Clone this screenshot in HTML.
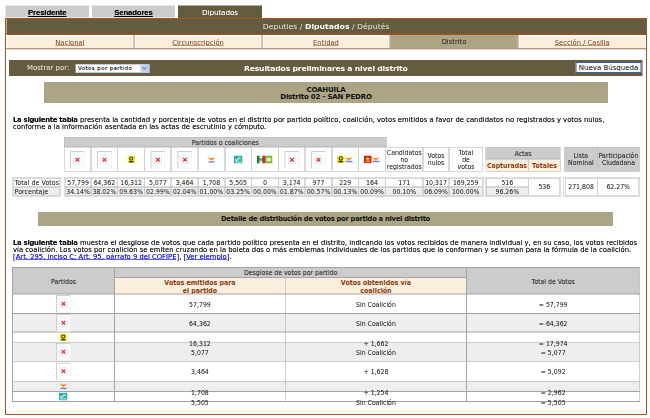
<!DOCTYPE html>
<html lang="es">
<head>
<meta charset="utf-8">
<title>Resultados preliminares a nivel distrito</title>
<style>
html,body{margin:0;padding:0;background:#fff;overflow:hidden;}
body{width:650px;height:418px;}
#w{position:absolute;left:0;top:0;width:1300px;height:836px;transform:scale(.5);transform-origin:0 0;
  font-family:"DejaVu Sans","Liberation Sans",sans-serif;font-size:13px;color:#222;}
#w *{box-sizing:border-box;}
.tab{position:absolute;top:11px;height:24px;background:#ccc;text-align:center;font-family:"Liberation Sans",sans-serif;font-weight:bold;font-size:15.5px;letter-spacing:-.25px;line-height:27px;color:#000;overflow:visible;text-shadow:0 0 1px rgba(0,0,0,.5);}
.tab a{color:#000;text-decoration:underline;text-decoration-thickness:1.6px;text-underline-offset:1.5px;}
.tab.on{height:27px;background:#655b3e;color:#fff;text-shadow:0 0 1px rgba(255,255,255,.4);font-weight:normal;font-family:"DejaVu Sans",sans-serif;font-size:14.5px;}
#box{position:absolute;left:10.2px;top:35.6px;width:1283.8px;height:794.4px;border:2.5px solid #aa5520;background:#fff;}
#bar{position:absolute;left:12.7px;top:38px;width:1279.3px;height:30px;background:#655b3e;color:#e8e4d8;font-size:15.5px;line-height:30px;text-align:center;}
#bar b{color:#fff;}
#navt{position:absolute;left:12.7px;top:66px;width:1279.3px;height:6px;background:linear-gradient(#7a5a34 0,#7a5a34 2px,#a8501a 2px,#a8501a 4px,#ecc9ad 4px,#ecc9ad 6px);}
#navb{position:absolute;left:12.7px;top:96px;width:1279.3px;height:4px;background:linear-gradient(#b98e7a 0,#b98e7a 2px,#ead9d0 2px,#ead9d0 4px);}
#navw{position:absolute;left:12.7px;top:70px;width:1279.3px;height:26px;background:#fffbf6;}
.nv{position:absolute;top:70px;height:26px;text-align:center;line-height:23px;font-size:13.5px;background:#fbeedd;border:3px solid #fffbf6;border-top-width:4px;border-bottom-width:0;}
.nv a{color:#7a3b1d;text-decoration:underline;}
.nv.on{background:#aba585;color:#222;border:none;line-height:27px;}
.ns{position:absolute;top:70px;height:26px;width:2px;background:#b08a78;}
#mb{position:absolute;left:18px;top:120px;width:1267px;height:31.5px;background:#655b3e;color:#fff;}
#mb .l{position:absolute;left:36px;top:0;line-height:30px;font-size:13.8px;color:#f4f0e6;}
#mb .t{position:absolute;left:0;width:100%;top:0;line-height:32px;font-size:15.4px;letter-spacing:-.4px;font-weight:bold;text-align:center;}
#sel{text-shadow:0 0 1px rgba(0,0,0,.45);position:absolute;left:133px;top:8px;width:147px;height:17px;background:#fff;border:1px solid #7f9db9;font-size:11px;letter-spacing:.8px;line-height:14.5px;color:#000;padding-left:4px;white-space:nowrap;}
#sel i{position:absolute;right:0;top:0;width:16px;height:15px;background:#c1d2f8;border:1px solid #a9bff0;border-radius:2px;}
#sel i svg{position:absolute;left:1px;top:2px;}
#btn{position:absolute;left:1133px;top:4px;width:132px;height:22px;background:#fff;border:2px solid #3b5fa8;font-size:14px;line-height:17px;text-align:center;color:#000;}
.hd{position:absolute;background:#aba585;color:#111;font-weight:bold;text-align:center;font-size:13.5px;}
.p{position:absolute;left:26px;font-size:13.65px;line-height:14.8px;color:#111;text-shadow:0 0 1.2px rgba(0,0,0,.55);white-space:nowrap;}
.p b{letter-spacing:-.5px;}
.p a{color:#00f;text-decoration:underline;text-shadow:0 0 1.2px rgba(0,0,255,.5);}
.c{text-shadow:0 0 1px rgba(0,0,0,.18);position:absolute;border:1px solid #b4b4b4;background:#fff;text-align:center;font-size:12.4px;color:#222;white-space:nowrap;overflow:visible;display:flex;align-items:center;justify-content:center;line-height:14px;padding-top:1.5px;}
.c.g{background:#ccc;}
.c.e{background:#eee;padding-top:3.5px;}
.c.be{background:#fbeedd;color:#8b3a0e;font-weight:bold;text-shadow:none;}
.c.lft{justify-content:flex-start;padding-left:1px;font-size:12.8px;}
.fr{position:absolute;border:1.2px solid #bcbcbc;}
.bi{position:relative;width:29px;height:35px;border-left:2px solid #d0d0c8;border-top:2px solid #d0d0c8;border-right:1px solid #ececec;border-bottom:1px solid #ececec;background:rgba(255,255,255,.6);}
.bi svg{position:absolute;left:5px;top:7px;}
.ic{display:block;}
.r{position:absolute;left:25px;width:1255px;border-bottom:1px solid #adadad;}
.r.e{background:#eee;}
.t2{text-shadow:0 0 1px rgba(0,0,0,.18);position:absolute;font-size:12.4px;line-height:14px;text-align:center;color:#222;white-space:nowrap;}
.v{position:absolute;width:1px;background:#adadad;}
</style>
</head>
<body>
<div id="w">
<div class="tab" style="left:11px;width:167px;"><a>Presidente</a></div>
<div class="tab" style="left:184px;width:166px;"><a>Senadores</a></div>
<div class="tab on" style="left:356px;width:168px;">Diputados</div>
<div id="box"></div>
<div id="bar">Deputies / <b>Diputados</b> / Députés</div>
<div id="navw"></div><div id="navt"></div><div id="navb"></div>
<div class="nv" style="left:12.7px;width:254.3px;"><a>Nacional</a></div>
<div class="nv" style="left:269px;width:254px;"><a>Circunscripción</a></div>
<div class="nv" style="left:525px;width:254px;"><a>Entidad</a></div>
<div class="nv on" style="left:781px;width:254px;">Distrito</div>
<div class="nv" style="left:1037px;width:255px;"><a>Sección / Casilla</a></div>
<div class="ns" style="left:267px;"></div><div class="ns" style="left:523px;"></div><div class="ns" style="left:779px;"></div><div class="ns" style="left:1035px;"></div>
<div id="mb">
<span class="l">Mostrar por:</span>
<div class="t">Resultados preliminares a nivel distrito</div>
<div id="sel">Votos por partido<i><svg width="12" height="10" viewBox="0 0 12 10"><path d="M2.500 2.500l3.500 4 3.500-4" stroke="#3f5286" stroke-width="2" fill="none"/></svg></i></div>
<div id="btn">Nueva Búsqueda</div>
</div>
<div class="hd" style="left:88px;top:164px;width:1128px;height:41.4px;line-height:15px;padding-top:6.5px;font-size:14px;letter-spacing:-.35px;">COAHUILA<br>Distrito 02 - SAN PEDRO</div>
<div class="p" style="top:231.5px;"><b>La siguiente tabla</b> presenta la cantidad y porcentaje de votos en el distrito por partido político, coalición, votos emitidos a favor de candidatos no registrados y votos nulos,<br>conforme a la información asentada en las actas de escrutinio y cómputo.</div>

<div class="fr" style="left:24.8px;top:353.800px;width:96.8px;height:39.400px;"></div>
<div class="fr" style="left:128.2px;top:353.800px;width:839.2px;height:39.400px;"></div>
<div class="fr" style="left:970px;top:353.800px;width:152.4px;height:39.400px;"></div>
<div class="fr" style="left:1127.4px;top:353.800px;width:153px;height:39.400px;"></div>
<div class="c g" style="left:128.2px;top:273.5px;width:644.6px;height:20.5px;">Partidos o coaliciones</div>
<div class="c " style="left:128.2px;top:294px;width:53.55px;height:49px;"><div class="bi"><svg width="16" height="17" viewBox="0 0 16 17"><rect x=".5" y=".5" width="15" height="16" fill="#fff" stroke="#d9d9d9"/><path d="M4.200 4.700l7.600 7.600M11.800 4.700l-7.600 7.600" stroke="#e8202a" stroke-width="2.300" fill="none"/></svg></div></div>
<div class="c " style="left:130.4px;top:356px;width:51.35px;height:17.8px;">57,799</div>
<div class="c e" style="left:130.4px;top:373.8px;width:51.35px;height:17.4px;">34.14%</div>
<div class="c " style="left:181.75px;top:294px;width:53.55px;height:49px;"><div class="bi"><svg width="16" height="17" viewBox="0 0 16 17"><rect x=".5" y=".5" width="15" height="16" fill="#fff" stroke="#d9d9d9"/><path d="M4.200 4.700l7.600 7.600M11.800 4.700l-7.600 7.600" stroke="#e8202a" stroke-width="2.300" fill="none"/></svg></div></div>
<div class="c " style="left:181.75px;top:356px;width:53.55px;height:17.8px;">64,362</div>
<div class="c e" style="left:181.75px;top:373.8px;width:53.55px;height:17.4px;">38.02%</div>
<div class="c " style="left:235.3px;top:294px;width:53.55px;height:49px;"><svg class="ic" width="15" height="16" viewBox="0 0 15 15"><rect width="15" height="15" fill="#f7ea1e"/><circle cx="7.500" cy="5.600" r="3.200" fill="none" stroke="#3a3a10" stroke-width="2.100"/><rect x="3.200" y="10.500" width="8.600" height="2.700" fill="#2a2a10"/></svg></div>
<div class="c " style="left:235.3px;top:356px;width:53.55px;height:17.8px;">16,312</div>
<div class="c e" style="left:235.3px;top:373.8px;width:53.55px;height:17.4px;">09.63%</div>
<div class="c " style="left:288.85px;top:294px;width:53.55px;height:49px;"><div class="bi"><svg width="16" height="17" viewBox="0 0 16 17"><rect x=".5" y=".5" width="15" height="16" fill="#fff" stroke="#d9d9d9"/><path d="M4.200 4.700l7.600 7.600M11.800 4.700l-7.600 7.600" stroke="#e8202a" stroke-width="2.300" fill="none"/></svg></div></div>
<div class="c " style="left:288.85px;top:356px;width:53.55px;height:17.8px;">5,077</div>
<div class="c e" style="left:288.85px;top:373.8px;width:53.55px;height:17.4px;">02.99%</div>
<div class="c " style="left:342.4px;top:294px;width:53.55px;height:49px;"><div class="bi"><svg width="16" height="17" viewBox="0 0 16 17"><rect x=".5" y=".5" width="15" height="16" fill="#fff" stroke="#d9d9d9"/><path d="M4.200 4.700l7.600 7.600M11.800 4.700l-7.600 7.600" stroke="#e8202a" stroke-width="2.300" fill="none"/></svg></div></div>
<div class="c " style="left:342.4px;top:356px;width:53.55px;height:17.8px;">3,464</div>
<div class="c e" style="left:342.4px;top:373.8px;width:53.55px;height:17.4px;">02.04%</div>
<div class="c " style="left:395.95px;top:294px;width:53.55px;height:49px;"><svg class="ic" width="16" height="13" viewBox="0 0 16 13"><path d="M1 1q3.500 2.500 6 2.200h2q2.500.3 6-2.200-1.500 4.300-5 5.300l-2 2.200-2-2.200Q2.500 5.300 1 1z" fill="#f58a28"/><rect x="2" y="9.500" width="12" height="2.600" fill="#5f7fd0"/></svg></div>
<div class="c " style="left:395.95px;top:356px;width:53.55px;height:17.8px;">1,708</div>
<div class="c e" style="left:395.95px;top:373.8px;width:53.55px;height:17.4px;">01.00%</div>
<div class="c " style="left:449.5px;top:294px;width:53.55px;height:49px;"><svg class="ic" width="17" height="16" viewBox="0 0 15 14"><rect width="15" height="14" fill="#2bb3a9"/><path d="M2 7l3 2 4-5 3 1" stroke="#fff" stroke-width="1.8" fill="none"/><rect x="2" y="10.5" width="11" height="1.6" fill="#d6f2f0"/></svg></div>
<div class="c " style="left:449.5px;top:356px;width:53.55px;height:17.8px;">5,505</div>
<div class="c e" style="left:449.5px;top:373.8px;width:53.55px;height:17.4px;">03.25%</div>
<div class="c " style="left:503.05px;top:294px;width:53.55px;height:49px;"><svg class="ic" width="31" height="16" viewBox="0 0 29 15"><rect width="5" height="15" fill="#0a8a3c"/><rect x="5" width="5" height="15" fill="#eee"/><rect x="10" width="5" height="15" fill="#d8232a"/><rect x="15" width="14" height="15" fill="#7ab829"/><path d="M18 4h8v7h-8z" fill="#e9f3c8"/><path d="M3 5h10v5H3z" fill="#444" opacity=".55"/></svg></div>
<div class="c " style="left:503.05px;top:356px;width:53.55px;height:17.8px;">0</div>
<div class="c e" style="left:503.05px;top:373.8px;width:53.55px;height:17.4px;">00.00%</div>
<div class="c " style="left:556.6px;top:294px;width:53.55px;height:49px;"><div class="bi"><svg width="16" height="17" viewBox="0 0 16 17"><rect x=".5" y=".5" width="15" height="16" fill="#fff" stroke="#d9d9d9"/><path d="M4.200 4.700l7.600 7.600M11.800 4.700l-7.600 7.600" stroke="#e8202a" stroke-width="2.300" fill="none"/></svg></div></div>
<div class="c " style="left:556.6px;top:356px;width:53.55px;height:17.8px;">3,174</div>
<div class="c e" style="left:556.6px;top:373.8px;width:53.55px;height:17.4px;">01.87%</div>
<div class="c " style="left:610.15px;top:294px;width:53.55px;height:49px;"><div class="bi"><svg width="16" height="17" viewBox="0 0 16 17"><rect x=".5" y=".5" width="15" height="16" fill="#fff" stroke="#d9d9d9"/><path d="M4.200 4.700l7.600 7.600M11.800 4.700l-7.600 7.600" stroke="#e8202a" stroke-width="2.300" fill="none"/></svg></div></div>
<div class="c " style="left:610.15px;top:356px;width:53.55px;height:17.8px;">977</div>
<div class="c e" style="left:610.15px;top:373.8px;width:53.55px;height:17.4px;">00.57%</div>
<div class="c " style="left:663.7px;top:294px;width:53.55px;height:49px;"><svg class="ic" width="32" height="16" viewBox="0 0 32 16"><rect width="15" height="15.500" fill="#f7ea1e"/><circle cx="7.500" cy="5.800" r="3.300" fill="none" stroke="#3a3a10" stroke-width="2.200"/><rect x="3.200" y="10.800" width="8.600" height="2.800" fill="#2a2a10"/><path d="M16.500 3q3.500 2.500 6 2.200h2q2.500.3 6-2.200-1.500 4.300-5 5.300l-2 2.200-2-2.200q-3.500-1-5-5.300z" fill="#f58a28"/><rect x="17" y="10.500" width="14" height="3" fill="#6a86d2"/></svg></div>
<div class="c " style="left:663.7px;top:356px;width:53.55px;height:17.8px;">229</div>
<div class="c e" style="left:663.7px;top:373.8px;width:53.55px;height:17.4px;">00.13%</div>
<div class="c " style="left:717.25px;top:294px;width:53.55px;height:49px;"><svg class="ic" width="32" height="16" viewBox="0 0 32 16"><rect width="15" height="15.500" fill="#e3141c"/><path d="M7.500 1.500l1.300 3.600h3.900l-3.100 2.300 1.200 3.700-3.300-2.300-3.300 2.300 1.200-3.700-3.100-2.300h3.900z" fill="#ffd21e"/><rect x="3" y="10.500" width="9" height="3" fill="#ffb400" opacity=".85"/><path d="M16.500 3q3.500 2.500 6 2.200h2q2.500.3 6-2.200-1.500 4.300-5 5.300l-2 2.200-2-2.200q-3.500-1-5-5.300z" fill="#f58a28"/><rect x="17" y="10.500" width="14" height="3" fill="#6a86d2"/></svg></div>
<div class="c " style="left:717.25px;top:356px;width:53.55px;height:17.8px;">164</div>
<div class="c e" style="left:717.25px;top:373.8px;width:53.55px;height:17.4px;">00.09%</div>
<div class="c " style="left:771px;top:294px;width:75px;height:49px;">Candidatos<br>no<br>registrados</div>
<div class="c " style="left:771px;top:356px;width:75px;height:17.8px;">171</div>
<div class="c e" style="left:771px;top:373.8px;width:75px;height:17.4px;">00.10%</div>
<div class="c " style="left:846px;top:294px;width:52px;height:49px;">Votos<br>nulos</div>
<div class="c " style="left:846px;top:356px;width:52px;height:17.8px;">10,317</div>
<div class="c e" style="left:846px;top:373.8px;width:52px;height:17.4px;">06.09%</div>
<div class="c " style="left:898px;top:294px;width:68px;height:49px;">Total<br>de<br>votos</div>
<div class="c " style="left:898px;top:356px;width:66.8px;height:17.8px;">169,259</div>
<div class="c e" style="left:898px;top:373.8px;width:66.8px;height:17.4px;">100.00%</div>
<div class="c g" style="left:971px;top:294px;width:150px;height:24px;">Actas</div>
<div class="c be" style="left:971px;top:318px;width:86px;height:25px;">Capturadas</div>
<div class="c be" style="left:1057px;top:318px;width:64px;height:25px;">Totales</div>
<div class="c " style="left:972.2px;top:356px;width:84.8px;height:17.8px;">516</div>
<div class="c e" style="left:972.2px;top:373.8px;width:84.8px;height:17.4px;">96.26%</div>
<div class="c " style="left:1057px;top:356px;width:63.2px;height:35.2px;">536</div>
<div class="c g" style="left:1128.8px;top:294px;width:65.8px;height:49px;">Lista<br>Nominal</div>
<div class="c g" style="left:1194.6px;top:294px;width:84.8px;height:49px;">Participación<br>Ciudadana</div>
<div class="c " style="left:1129.6px;top:356px;width:65px;height:35.2px;">271,808</div>
<div class="c " style="left:1194.6px;top:356px;width:83.6px;height:35.2px;">62.27%</div>
<div class="c lft" style="left:27px;top:356px;width:92.4px;height:17.8px;">Total de Votos</div>
<div class="c e lft" style="left:27px;top:373.8px;width:92.4px;height:17.4px;">Porcentaje</div>
<div class="hd" style="left:76px;top:424px;width:1150px;height:27px;line-height:27px;letter-spacing:-.52px;">Detalle de distribución de votos por partido a nivel distrito</div>
<div class="p" style="top:476.5px;"><b>La siguiente tabla</b> muestra el desglose de votos que cada partido político presenta en el distrito, indicando los votos recibidos de manera individual y, en su caso, los votos recibidos<br>vía coalición. Los votos por coalición se emiten cruzando en la boleta dos o más emblemas individuales de los partidos que la conforman y se suman para la fórmula de la coalición.<br><a>[Art. 295, inciso C; Art. 95, párrafo 9 del COFIPE]</a>, <a>[Ver ejemplo]</a>.</div>

<div class="" style="position:absolute;left:24.8px;top:535px;width:204.4px;height:53px;background:#ccc;display:flex;align-items:center;justify-content:center;text-align:center;font-size:12.4px;line-height:14px;color:#222;text-shadow:0 0 1px rgba(0,0,0,.18);padding-top:2px;">Partidos</div>
<div class="" style="position:absolute;left:229.2px;top:535px;width:704px;height:20px;background:#ccc;display:flex;align-items:center;justify-content:center;text-align:center;font-size:12.4px;line-height:14px;color:#222;text-shadow:0 0 1px rgba(0,0,0,.18);">Desglose de votos por partido</div>
<div class="" style="position:absolute;left:229.2px;top:555px;width:341.4px;height:33px;background:#fbeedd;display:flex;align-items:center;justify-content:center;text-align:center;font-size:12.6px;line-height:16px;color:#8b3a0e;font-weight:bold;padding-top:3px;">Votos emitidos para<br>el partido</div>
<div class="" style="position:absolute;left:570.6px;top:555px;width:362.6px;height:33px;background:#fbeedd;display:flex;align-items:center;justify-content:center;text-align:center;font-size:12.6px;line-height:16px;color:#8b3a0e;font-weight:bold;padding-top:3px;">Votos obtenidos vía<br>coalición</div>
<div class="" style="position:absolute;left:933.2px;top:535px;width:346.2px;height:53px;background:#ccc;display:flex;align-items:center;justify-content:center;text-align:center;font-size:12.4px;line-height:14px;color:#222;text-shadow:0 0 1px rgba(0,0,0,.18);padding-top:2px;">Total de Votos</div>
<div class="" style="position:absolute;left:24.8px;top:626.8px;width:1254.6px;height:37.4px;background:#eee;"></div>
<div class="" style="position:absolute;left:24.8px;top:685.4px;width:1254.6px;height:37.2px;background:#eee;"></div>
<div class="" style="position:absolute;left:24.8px;top:762.4px;width:1254.6px;height:20.8px;background:#eee;"></div>
<div class="" style="position:absolute;left:24px;top:587.2px;width:1256.2px;height:1.6px;background:#a4a4a4;"></div>
<div class="" style="position:absolute;left:24px;top:626px;width:1256.2px;height:1.6px;background:#a4a4a4;"></div>
<div class="" style="position:absolute;left:24px;top:663.4px;width:1256.2px;height:1.6px;background:#a4a4a4;"></div>
<div class="" style="position:absolute;left:24px;top:684.6px;width:1256.2px;height:1.6px;background:#a4a4a4;"></div>
<div class="" style="position:absolute;left:24px;top:721.8px;width:1256.2px;height:1.6px;background:#a4a4a4;"></div>
<div class="" style="position:absolute;left:24px;top:761.6px;width:1256.2px;height:1.6px;background:#a4a4a4;"></div>
<div class="" style="position:absolute;left:24px;top:782.4px;width:1256.2px;height:1.6px;background:#a4a4a4;"></div>
<div class="" style="position:absolute;left:24px;top:802.4px;width:1256.2px;height:1.6px;background:#a4a4a4;"></div>
<div class="" style="position:absolute;left:24px;top:534.2px;width:1256.2px;height:1.6px;background:#a4a4a4;"></div>
<div class="" style="position:absolute;left:229.2px;top:554.2px;width:704px;height:1.6px;background:#a4a4a4;"></div>
<div class="" style="position:absolute;left:24px;top:535px;width:1.6px;height:268.2px;background:#a4a4a4;"></div>
<div class="" style="position:absolute;left:228.4px;top:535px;width:1.6px;height:268.2px;background:#a4a4a4;"></div>
<div class="" style="position:absolute;left:569.8px;top:555px;width:1.6px;height:248.2px;background:#a4a4a4;"></div>
<div class="" style="position:absolute;left:932.4px;top:535px;width:1.6px;height:268.2px;background:#a4a4a4;"></div>
<div class="" style="position:absolute;left:1278.6px;top:535px;width:1.6px;height:268.2px;background:#a4a4a4;"></div>
<div style="position:absolute;left:24.8px;top:588px;width:204.39999999999998px;height:38.8px;display:flex;align-items:center;justify-content:center;"><div class="bi"><svg width="16" height="17" viewBox="0 0 16 17"><rect x=".5" y=".5" width="15" height="16" fill="#fff" stroke="#d9d9d9"/><path d="M4.200 4.700l7.600 7.600M11.800 4.700l-7.600 7.600" stroke="#e8202a" stroke-width="2.300" fill="none"/></svg></div></div>
<div class="t2" style="left:229.2px;width:341.4px;top:601.6px;">57,799</div>
<div class="t2" style="left:570.6px;width:362.6px;top:601.6px;">Sin Coalición</div>
<div class="t2" style="left:933.2px;width:346.2px;top:601.6px;">= 57,799</div>
<div style="position:absolute;left:24.8px;top:626.8px;width:204.39999999999998px;height:37.4px;display:flex;align-items:center;justify-content:center;"><div class="bi"><svg width="16" height="17" viewBox="0 0 16 17"><rect x=".5" y=".5" width="15" height="16" fill="#fff" stroke="#d9d9d9"/><path d="M4.200 4.700l7.600 7.600M11.800 4.700l-7.600 7.600" stroke="#e8202a" stroke-width="2.300" fill="none"/></svg></div></div>
<div class="t2" style="left:229.2px;width:341.4px;top:639.7px;">64,362</div>
<div class="t2" style="left:570.6px;width:362.6px;top:639.7px;">Sin Coalición</div>
<div class="t2" style="left:933.2px;width:346.2px;top:639.7px;">= 64,362</div>
<div style="position:absolute;left:24.8px;top:664.2px;width:204.39999999999998px;height:21.2px;display:flex;align-items:center;justify-content:center;"><svg class="ic" width="15" height="16" viewBox="0 0 15 15"><rect width="15" height="15" fill="#f7ea1e"/><circle cx="7.500" cy="5.600" r="3.200" fill="none" stroke="#3a3a10" stroke-width="2.100"/><rect x="3.200" y="10.500" width="8.600" height="2.700" fill="#2a2a10"/></svg></div>
<div class="t2" style="left:229.2px;width:341.4px;top:680px;">16,312</div>
<div class="t2" style="left:570.6px;width:362.6px;top:680px;">+ 1,662</div>
<div class="t2" style="left:933.2px;width:346.2px;top:680px;">= 17,974</div>
<div style="position:absolute;left:24.8px;top:685.4px;width:204.39999999999998px;height:37.2px;display:flex;align-items:center;justify-content:center;"><div class="bi"><svg width="16" height="17" viewBox="0 0 16 17"><rect x=".5" y=".5" width="15" height="16" fill="#fff" stroke="#d9d9d9"/><path d="M4.200 4.700l7.600 7.600M11.800 4.700l-7.600 7.600" stroke="#e8202a" stroke-width="2.300" fill="none"/></svg></div></div>
<div class="t2" style="left:229.2px;width:341.4px;top:698.2px;">5,077</div>
<div class="t2" style="left:570.6px;width:362.6px;top:698.2px;">Sin Coalición</div>
<div class="t2" style="left:933.2px;width:346.2px;top:698.2px;">= 5,077</div>
<div style="position:absolute;left:24.8px;top:722.6px;width:204.39999999999998px;height:39.8px;display:flex;align-items:center;justify-content:center;"><div class="bi"><svg width="16" height="17" viewBox="0 0 16 17"><rect x=".5" y=".5" width="15" height="16" fill="#fff" stroke="#d9d9d9"/><path d="M4.200 4.700l7.600 7.600M11.800 4.700l-7.600 7.600" stroke="#e8202a" stroke-width="2.300" fill="none"/></svg></div></div>
<div class="t2" style="left:229.2px;width:341.4px;top:736.7px;">3,464</div>
<div class="t2" style="left:570.6px;width:362.6px;top:736.7px;">+ 1,628</div>
<div class="t2" style="left:933.2px;width:346.2px;top:736.7px;">= 5,092</div>
<div style="position:absolute;left:24.8px;top:762.4px;width:204.39999999999998px;height:20.8px;display:flex;align-items:center;justify-content:center;"><svg class="ic" width="16" height="13" viewBox="0 0 16 13"><path d="M1 1q3.500 2.500 6 2.200h2q2.500.3 6-2.200-1.500 4.300-5 5.300l-2 2.200-2-2.200Q2.500 5.300 1 1z" fill="#f58a28"/><rect x="2" y="9.500" width="12" height="2.600" fill="#5f7fd0"/></svg></div>
<div class="t2" style="left:229.2px;width:341.4px;top:778px;">1,708</div>
<div class="t2" style="left:570.6px;width:362.6px;top:778px;">+ 1,254</div>
<div class="t2" style="left:933.2px;width:346.2px;top:778px;">= 2,962</div>
<div style="position:absolute;left:24.8px;top:783.2px;width:204.39999999999998px;height:20px;display:flex;align-items:center;justify-content:center;"><svg class="ic" width="17" height="16" viewBox="0 0 15 14"><rect width="15" height="14" fill="#2bb3a9"/><path d="M2 7l3 2 4-5 3 1" stroke="#fff" stroke-width="1.8" fill="none"/><rect x="2" y="10.5" width="11" height="1.6" fill="#d6f2f0"/></svg></div>
<div class="t2" style="left:229.2px;width:341.4px;top:798.4px;">5,505</div>
<div class="t2" style="left:570.6px;width:362.6px;top:798.4px;">Sin Coalición</div>
<div class="t2" style="left:933.2px;width:346.2px;top:798.4px;">= 5,505</div>
</div>
</body>
</html>
